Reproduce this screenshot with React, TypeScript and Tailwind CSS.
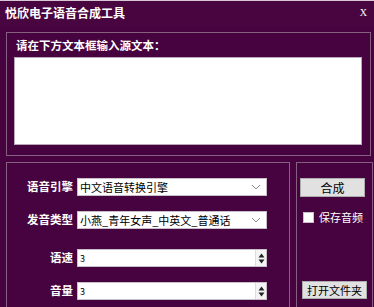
import React from 'react';

const Chevron = () => (
  <svg width="10" height="6" viewBox="0 0 10 6" className="shrink-0">
    <path d="M1 1 L5 5 L9 1" fill="none" stroke="#8a8a8a" strokeWidth="1" />
  </svg>
);

const Spinner = () => (
  <div className="flex flex-col items-center justify-center w-[11px] h-full border-l border-[#dcdcdc] bg-[#f4f4f4]">
    <svg width="7" height="5" viewBox="0 0 7 5">
      <path d="M3.5 0.5 L6.5 4.5 L0.5 4.5 Z" fill="#222" />
    </svg>
    <svg width="7" height="5" viewBox="0 0 7 5" className="mt-[1px]">
      <path d="M0.5 0.5 L6.5 0.5 L3.5 4.5 Z" fill="#222" />
    </svg>
  </div>
);

const SelectRow = ({ label, value, top }: { label: string; value: string; top: string }) => (
  <div className={`flex items-center ${top}`}>
    <span className="w-[66px] text-right text-[11.5px] font-bold text-white leading-none">
      {label}
    </span>
    <div className="ml-[4px] flex items-center justify-between w-[190px] h-[18px] bg-white border border-[#c8c0c8] pl-[2px] pr-[5px]">
      <span className="text-[11px] text-black leading-none">{value}</span>
      <Chevron />
    </div>
  </div>
);

const NumberRow = ({ label, top }: { label: string; top: string }) => (
  <div className={`flex items-center ${top}`}>
    <span className="w-[66px] text-right text-[11.5px] font-bold text-white leading-none">
      {label}
    </span>
    <div className="ml-[4px] flex items-center w-[190px] h-[18px] bg-white border border-[#c8c0c8]">
      <span className="flex-1 pl-[2px] text-[9px] text-black leading-none">3</span>
      <Spinner />
    </div>
  </div>
);

const App = () => {
  return (
    <div
      className="w-[374px] h-[307px] overflow-hidden bg-[#46033f] flex flex-col border-t border-[#d8c8d6]"
      style={{ fontFamily: '"Noto Sans CJK SC", "Liberation Sans", sans-serif' }}
    >
      <div className="flex items-center justify-between h-[24px] pl-[5px] pr-[7px] bg-[#48053f]">
        <span className="text-[12px] font-bold text-white leading-none">悦欣电子语音合成工具</span>
        <span className="text-[10px] text-white leading-none" style={{ fontFamily: '"Liberation Serif", serif' }}>
          X
        </span>
      </div>

      <div className="ml-[6px] mr-[3px] mt-[7px] h-[124px] border border-[#85607f] flex flex-col">
        <span className="mt-[5px] pl-[9px] text-[11.5px] font-bold text-white leading-[14px]">
          请在下方文本框输入源文本：
        </span>
        <div className="ml-[7px] mr-[8px] mt-[5px] h-[88px] bg-white border border-[#b9a8b7]" />
      </div>

      <div className="flex mt-[6px] ml-[6px] flex-1">
        <div className="w-[284px] border border-b-0 border-[#85607f] flex flex-col">
          <SelectRow label="语音引擎" value="中文语音转换引擎" top="mt-[15px]" />
          <SelectRow label="发音类型" value="小燕_青年女声_中英文_普通话" top="mt-[15px]" />
          <NumberRow label="语速" top="mt-[20px]" />
          <NumberRow label="音量" top="mt-[15px]" />
        </div>
        <div className="ml-[6px] w-[77px] border border-b-0 border-[#85607f] flex flex-col">
          <button className="mt-[15px] ml-[3px] w-[65px] h-[19px] bg-[#e1e1e1] border border-[#adadad] text-[12px] text-black leading-none">
            合成
          </button>
          <label className="mt-[15px] ml-[6px] flex items-center">
            <span className="w-[11px] h-[11px] bg-white border border-[#c8c0c8]" />
            <span className="ml-[5px] text-[11px] text-white leading-none">保存音频</span>
          </label>
          <button className="mt-[58px] ml-[5px] w-[65px] h-[18px] bg-[#e1e1e1] border border-[#adadad] text-[11px] text-black leading-none">
            打开文件夹
          </button>
        </div>
      </div>
    </div>
  );
};

export default App;
